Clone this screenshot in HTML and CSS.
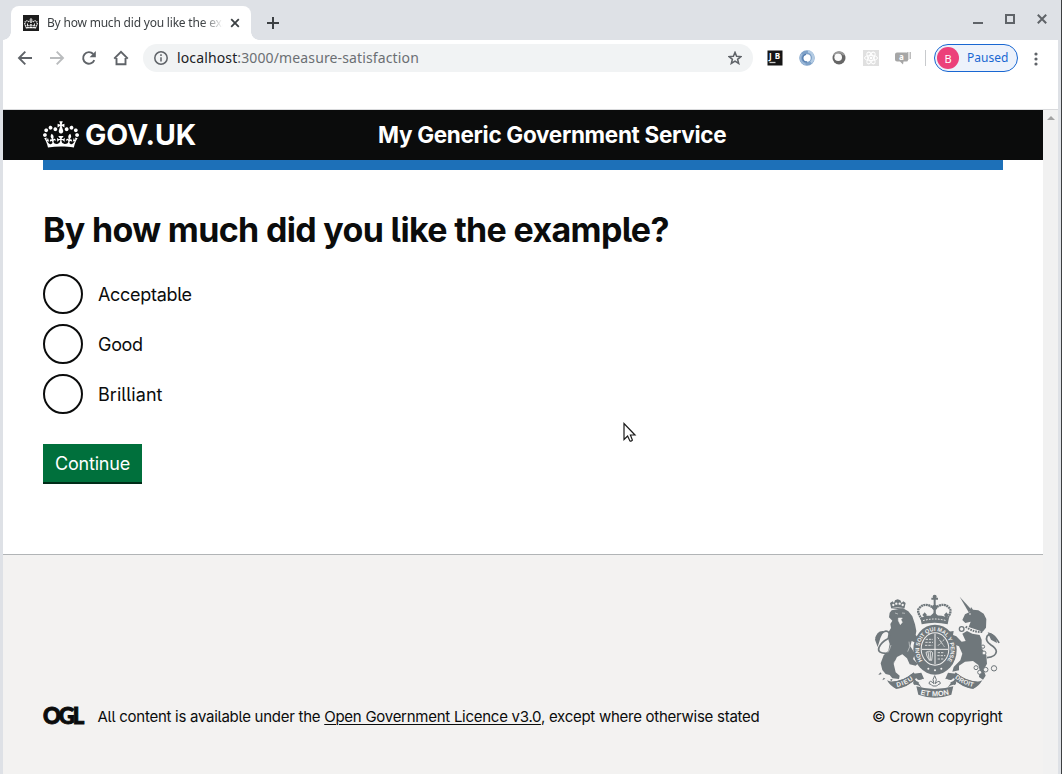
FILE: index.html
```html
<!DOCTYPE html>
<html lang="en">
<head>
<meta charset="utf-8">
<title>By how much did you like the example?</title>
<link rel="stylesheet" href="styles.css">
</head>
<body>
<svg class="defs" aria-hidden="true">
  <symbol id="crown" viewBox="0 0 132 97">
    <path d="M25 30.2c3.5 1.5 7.7-.2 9.1-3.7 1.5-3.6-.2-7.8-3.9-9.2-3.6-1.4-7.6.3-9.1 3.9-1.4 3.5.3 7.5 3.9 9zM9 39.5c3.6 1.5 7.8-.2 9.2-3.7 1.5-3.6-.2-7.8-3.9-9.1-3.6-1.5-7.6.2-9.1 3.8-1.4 3.5.3 7.5 3.8 9zM4.4 57.2c3.5 1.5 7.7-.2 9.1-3.8 1.5-3.6-.2-7.7-3.9-9.1-3.5-1.5-7.6.3-9.1 3.8-1.4 3.5.3 7.6 3.9 9.1zm38.3-21.4c3.5 1.5 7.7-.2 9.1-3.8 1.5-3.6-.2-7.7-3.9-9.1-3.6-1.5-7.6.3-9.1 3.8-1.3 3.6.4 7.7 3.9 9.1zm64.4-5.6c-3.6 1.5-7.8-.2-9.1-3.7-1.5-3.6.2-7.8 3.8-9.2 3.6-1.4 7.7.3 9.2 3.9 1.3 3.5-.4 7.5-3.9 9zm15.9 9.3c-3.6 1.5-7.7-.2-9.1-3.7-1.5-3.6.2-7.8 3.7-9.1 3.6-1.5 7.7.2 9.2 3.8 1.5 3.5-.3 7.5-3.8 9zm4.7 17.7c-3.6 1.5-7.8-.2-9.2-3.8-1.5-3.6.2-7.7 3.9-9.1 3.6-1.5 7.7.3 9.2 3.8 1.3 3.5-.4 7.6-3.9 9.1zM89.3 35.8c-3.6 1.5-7.8-.2-9.2-3.8-1.4-3.6.2-7.7 3.9-9.1 3.6-1.5 7.7.3 9.2 3.8 1.4 3.6-.3 7.7-3.9 9.1zM69.7 17.7l8.9 4.7V9.3l-8.9 2.8c-.2-.3-.5-.6-.9-.9L72.4 0H59.6l3.5 11.2c-.3.3-.6.5-.9.9l-8.8-2.8v13.1l8.8-4.7c.3.3.6.7.9.9l-5 15.4v.1c-.2.8-.4 1.6-.4 2.4 0 4.1 3.1 7.5 7 8.1h.2c.3 0 .7.1 1 .1.4 0 .7 0 1-.1h.2c4-.6 7.1-4.1 7.1-8.1 0-.8-.1-1.7-.4-2.4V34l-5.1-15.4c.4-.2.7-.6 1-.9zM66 92.8c16.9 0 32.8 1.1 47.1 3.2 4-16.9 8.9-26.7 14-33.5l-9.6-3.4c1 4.9 1.1 7.2 0 10.2-1.5-1.4-3-4.3-4.2-8.7L108.6 76c2.8-2 5-3.2 7.5-3.3-4.4 9.4-10 11.9-13.6 11.2-4.3-.8-6.3-4.6-5.6-7.9 1-4.7 5.7-5.9 8-.5 4.3-8.7-3-11.4-7.6-8.8 7.1-7.2 7.9-13.5 2.1-21.1-8 6.1-8.1 12.3-4.5 20.8-4.7-5.4-12.1-2.5-9.5 6.2 3.4-5.2 7.9-2 7.2 3.1-.6 4.3-6.4 7.8-13.5 7.2-10.3-.9-10.9-8-11.2-13.8 2.5-.5 7.1 1.8 11 7.3L80.2 60c-4.1 4.4-8 5.3-12.3 5.4 1.4-4.4 8-11.6 8-11.6H55.5s6.4 7.2 7.9 11.6c-4.2-.1-8-1-12.3-5.4l1.4 16.4c3.9-5.5 8.5-7.7 10.9-7.3-.3 5.8-.9 12.8-11.1 13.8-7.2.6-12.9-2.9-13.5-7.2-.7-5 3.8-8.3 7.1-3.1 2.7-8.7-4.6-11.6-9.4-6.2 3.7-8.5 3.6-14.7-4.6-20.8-5.8 7.6-5 13.9 2.2 21.1-4.7-2.6-11.9.1-7.7 8.8 2.3-5.5 7.1-4.2 8.1.5.7 3.3-1.3 7.1-5.7 7.9-3.5.7-9-1.8-13.5-11.2 2.5.1 4.7 1.3 7.5 3.3l-4.7-15.4c-1.2 4.4-2.7 7.2-4.3 8.7-1.1-3-.9-5.3 0-10.2l-9.5 3.4c5 6.9 9.9 16.7 14 33.5 14.8-2.1 30.8-3.2 47.7-3.2z"/>
  </symbol>
</svg>

<div class="window">
  <div class="tabstrip">
    <div class="tab">
      <span class="favicon"><svg width="14" height="11"><use href="#crown"/></svg></span>
      <span class="tab-title">By how much did you like the example?</span>
      <svg class="tab-close" width="10" height="10" viewBox="0 0 10 10"><path d="M1.2 1.2l7.6 7.6M8.8 1.2L1.2 8.8"/></svg>
    </div>
    <svg class="new-tab" width="12" height="12" viewBox="0 0 12 12"><path d="M6 0v12M0 6h12"/></svg>
    <div class="window-controls">
      <svg width="10" height="12" viewBox="0 0 10 12"><path d="M0 10h10"/></svg>
      <svg width="10" height="12" viewBox="0 0 10 12"><path d="M1 2h8v8H1z"/></svg>
      <svg width="10" height="12" viewBox="0 0 10 12"><path d="M.8 1.8l8.4 8.4M9.2 1.8L.8 10.2"/></svg>
    </div>
  </div>

  <div class="toolbar">
    <div class="nav">
      <svg width="16" height="16" viewBox="0 0 16 16"><path d="M15 8H2.5M8.3 1.7L2 8l6.3 6.3"/></svg>
      <svg class="disabled" width="16" height="16" viewBox="0 0 16 16"><path d="M1 8h12.500M7.700 1.700L14 8l-6.300 6.300"/></svg>
      <svg width="16" height="16" viewBox="0 0 16 16"><path d="M13.300 10.200A5.800 5.800 0 1 1 12.200 4"/><path class="solid" d="M14.800 1v6.200H8.600z"/></svg>
      <svg width="16" height="16" viewBox="0 0 16 16"><path d="M1.200 8.600L8 1.900l6.800 6.700M3.500 8v6.200h9V8"/></svg>
    </div>
    <div class="omnibox">
      <svg class="info" width="14" height="14" viewBox="0 0 14 14"><circle cx="7" cy="7" r="6.200"/><path d="M7 6.200V10.500M7 3.300v1.700"/></svg>
      <span class="url"><b>localhost</b>:3000/measure-satisfaction</span>
      <svg class="star" width="14" height="14" viewBox="0 0 14 14"><path d="M7 1.400l1.600 3.900 4.300.3-3.300 2.700 1.100 4.200L7 10.200l-3.700 2.300 1.100-4.200L1.100 5.600l4.300-.3z"/></svg>
    </div>
    <div class="extensions">
      <svg width="16" height="16" viewBox="0 0 16 16"><rect width="15" height="15" x=".5" y=".5" fill="#151515"/><text class="jb" x="2" y="9" textLength="11">JB</text><path d="M2.500 12.500h6" stroke="#ccc" stroke-width="1.300"/></svg>
      <svg width="16" height="16" viewBox="0 0 16 16"><circle cx="8" cy="8" r="5.700" fill="none" stroke="#7ea1c8" stroke-width="4"/><path d="M9 1.300a6.500 6.500 0 0 1 3 11.200" fill="none" stroke="#b3cbe3" stroke-width="2.500"/><path d="M6.500 14.400a6.500 6.500 0 0 1-3.500-10.500" fill="none" stroke="#9db9d9" stroke-width="1.500"/><path d="M7 4.300a3.800 3.800 0 0 0 1 7.600" fill="none" stroke="#557daf" stroke-width="1.200"/></svg>
      <svg width="16" height="16" viewBox="0 0 16 16"><circle cx="8" cy="8" r="6.500" fill="#666"/><path d="M3 5a6 6 0 0 1 10 0" fill="none" stroke="#999" stroke-width="2"/><circle cx="7.200" cy="7.200" r="3.800" fill="#fafafa"/></svg>
      <svg width="16" height="16" viewBox="0 0 16 16"><rect width="16" height="16" fill="#e0e0e0"/><g fill="none" stroke="#fff"><ellipse cx="8" cy="8" rx="6.500" ry="2.600"/><ellipse cx="8" cy="8" rx="6.500" ry="2.600" transform="rotate(60 8 8)"/><ellipse cx="8" cy="8" rx="6.500" ry="2.600" transform="rotate(120 8 8)"/></g><circle cx="8" cy="8" r="1.300" fill="#fff"/></svg>
      <svg width="16" height="16" viewBox="0 0 16 16"><path d="M12 2h1.500v8H12zM14.500 2H16v7h-1.500z" fill="#bdbdbd"/><path d="M2 2.500h9.500q1.500 0 1.500 1.500v6q0 1.500-1.500 1.500H8.500L8 14.500l-3-3H2Q0 11.500 0 9.500V4.500q0-2 2-2z" fill="#a6a6a6"/><text class="ext-a" x="4" y="10">a</text></svg>
    </div>
    <span class="divider"></span>
    <div class="profile"><span class="avatar">B</span><span>Paused</span></div>
    <svg class="menu" width="4" height="14" viewBox="0 0 4 14"><circle cx="2" cy="2" r="1.600"/><circle cx="2" cy="7" r="1.600"/><circle cx="2" cy="12" r="1.600"/></svg>
  </div>

  <div class="viewport">
    <div class="page">
      <header class="header">
        <div class="brand"><svg width="36" height="27"><use href="#crown"/></svg><span class="wordmark">GOV.UK</span></div>
        <span class="service">My Generic Government Service</span>
      </header>
      <div class="blue-bar"></div>
      <main class="main">
        <h1>By how much did you like the example?</h1>
        <div class="radios">
          <label><span class="radio"></span>Acceptable</label>
          <label><span class="radio"></span>Good</label>
          <label class="loose"><span class="radio"></span>Brilliant</label>
        </div>
        <button class="button" type="button">Continue</button>
      </main>
      <footer class="footer">
        <div class="licence">
          <span class="ogl">OGL</span>
          <span class="licence-text">All content is available under the <a href="#">Open Government Licence v3.0</a>, except where otherwise stated</span>
        </div>
        <div class="copyright">
          <svg class="crest" width="131" height="104" viewBox="39 27 393 312">
            <!-- lion -->
            <path d="M97 72l-4-18 8-5 4 5 3-8 8-3 8 3 4 8 5-5 7 5-4 18z"/>
            <g fill="#f3f2f1"><circle cx="103" cy="60" r="3.500"/><circle cx="112" cy="56" r="3.500"/><circle cx="122" cy="56" r="3.500"/><circle cx="131" cy="60" r="3.500"/></g>
            <path d="M96 71q20-7 41 0" fill="none" stroke="#f3f2f1" stroke-width="2"/>
            <path d="M98 76l34-6 16 9 12 15 8 24 4 20-2 12 12 14-6 12-18-8-4 16 14 22-6 16 14 14-6 6-18-4-8-18-14-12-16 8-10 20 6 26 12 10-2 10-20-2-8-10-12-3-10-12-5-20 9-24 14-14 4-20-6-20 4-18 6-10-2-12 6-10-10-10 2-14z"/>
            <path d="M108 84l9 3M129 84l9 1M118 99h12l-4 5 4 8-6 7-6-12z" fill="#f3f2f1" stroke="#f3f2f1" stroke-width="1.500"/>
            <path d="M104 232q14-12 30-8M150 170q6 16-4 30M96 180q-4 16-12 26" fill="none" stroke="#f3f2f1" stroke-width="1.500"/>
            <path d="M87 205q-34 2-27-18 8-16 24-24 12-8 6-20-8-10-22 2-12 14-18 12" fill="none" stroke="#6f777b" stroke-width="5"/>
            <path d="M74 138q-22-2-26 26l8 22 8-26z"/>
            <path d="M64 262l-6 8 10-3zM74 278l-4 8 9-5zM94 282l2 8 5-7z"/>
            <!-- unicorn -->
            <path d="M302 35l37 41-10 6z"/>
            <path d="M336 66l6 8 16 2 16 10 8 16-1 26-10 12-42-14 6-16-16 4-9-9 8-17 15-8z"/>
            <circle cx="333" cy="87" r="2.500" fill="#f3f2f1"/>
            <path d="M320 125q24 18 52 16" fill="none" stroke="#6f777b" stroke-width="6" stroke-dasharray="5 3"/>
            <path d="M310 146l14-8 16 8 22 4 6 14 0 26 14 20 2 26-10 18 6 18-8 12-12-8 2-20-4-16-16-12-24 2-18 12 0 14-20 4 4-14 20-20 6-20-10-22-16-6-22-22 6-16 16-2-2 12 10 4 16 16 12-2z"/>
            <circle cx="308" cy="132" r="7" fill="none" stroke="#6f777b" stroke-width="4"/>
            <path d="M384 218q26-2 28-18 0-10-16-20-18-12-12-26 8-12 22 0 12 14 14 20" fill="none" stroke="#6f777b" stroke-width="5"/>
            <path d="M386 142q24 2 28 32l-18-10z"/>
            <g fill="#f3f2f1" stroke="#6f777b" stroke-width="3"><circle cx="351" cy="248" r="6"/><circle cx="362" cy="262" r="6"/><circle cx="380" cy="254" r="7"/><circle cx="405" cy="250" r="8"/><circle cx="372" cy="185" r="5"/><circle cx="375" cy="204" r="6"/></g>
            <!-- crown above the shield -->
            <g fill="none" stroke="#6f777b"><path d="M189 103q-18-25-8-34 18-20 45 2 27-22 45-2 10 9-8 34" stroke-width="7" stroke-dasharray="6 1.500"/><path d="M227 70v24" stroke-width="7"/><path d="M217 41h20M227 30v32" stroke-width="6"/></g>
            <circle cx="227" cy="35" r="6"/><circle cx="227" cy="67" r="8"/>
            <path d="M198 98l-8-8 7-8 7 8zM208 98l18-16 18 16zM262 98l-7-8 7-8 7 8zM184 98q43-14 86 0l-4 20q-39-10-78 0z"/>
            <path d="M192 107q35-10 70 0" fill="none" stroke="#f3f2f1" stroke-width="3" stroke-dasharray="5 4"/>
            <!-- garter and shield -->
            <ellipse cx="228" cy="194" rx="65" ry="75"/>
            <ellipse cx="228" cy="192" rx="43" ry="50" fill="#f3f2f1"/>
            <ellipse cx="228" cy="192" rx="40" ry="47"/>
            <path d="M228 146v92M189 193h78" stroke="#f3f2f1" stroke-width="3"/>
            <g stroke="#f3f2f1" stroke-width="2.500" fill="none"><path d="M200 163h22M199 172h23M198 181h22M236 157l20 28M256 163l-20 20M236 203h20M235 212h24M236 222h18" stroke-dasharray="7 3"/><path d="M201 202q16-8 20 2l-3 22q-12 2-17-24M207 201l4 26M214 201v24"/></g>
            <path id="garter" d="M191 227A47 55 0 1 1 265 227" fill="none"/>
            <text class="motto"><textPath href="#garter" textLength="232" lengthAdjust="spacingAndGlyphs">HONI SOIT QUI MAL Y PENSE</textPath></text>
            <g fill="#f3f2f1"><circle cx="208" cy="251" r="3"/><circle cx="228" cy="256" r="3"/><circle cx="247" cy="251" r="3"/></g>
            <!-- ribbon -->
            <path d="M84 286l14 5q38-4 59-24l30-4 8 18-17 12 11 16q-13-12-22-9-8-4-2-14l8-6q-30 28-62 31-16-6-27-25zM370 286l-14 5q-38-4-59-24l-30-4-8 18 17 12-11 16q13-12 22-9 8-4 2-14l-8-6q30 28 62 31 16-6 27-25z"/>
            <path d="M92 290q44 0 72-28l10 17q-30 30-62 32-12-6-20-21zM362 290q-44 0-72-28l-10 17q30 30 62 32 12-6 20-21z"/>
            <path d="M172 304q54 16 111 0l-6 25q-50 18-99 0z"/>
            <path d="M170 281q6 13 24 3M285 281q-6 13-24 3" stroke="#f3f2f1" stroke-width="6" fill="none"/>
            <path d="M227 272q-9 12-2 24-14-14-15 0 8 2 11 7h12q3-5 11-7-1-14-15 0 7-12-2-24z" fill="none" stroke="#6f777b" stroke-width="3"/>
            <path id="dieu" d="M114 306q28-5 52-25" fill="none"/><path id="droit" d="M287 279q27 22 60 28" fill="none"/><path id="mon" d="M184 328q42 12 88 0" fill="none"/>
            <g class="ribbon-text"><text><textPath href="#dieu" textLength="54">DIEU</textPath></text><text><textPath href="#droit" textLength="62">DROIT</textPath></text><text class="wide"><textPath href="#mon" textLength="88">ET MON</textPath></text></g>
          </svg>
          <span>© Crown copyright</span>
        </div>
      </footer>
    </div>
    <div class="scrollbar"><svg width="8" height="4" viewBox="0 0 8 4"><path d="M4 0l4 4H0z"/></svg></div>
  </div>
</div>
<svg class="cursor" width="14" height="21" viewBox="0 0 14 21"><path d="M1 1.500v16l3.600-3.400 2.200 4.600q1.200 1.100 2.600-.6L7.400 13H12z"/></svg>
</body>
</html>
```
FILE: styles.css
```css
* { box-sizing: border-box; }
body { margin: 0; width: 1062px; height: 774px; overflow: hidden; background: #dee1e6; }
svg { display: block; flex: none; }
.defs { display: none; }

.window { height: 774px; padding: 0 3px 0 3px; border-right: 1px solid #3c3f41; display: flex; flex-direction: column; font-family: "Noto Sans", sans-serif; }

/* Browser chrome */
.tabstrip { height: 40px; display: flex; align-items: flex-start; padding-left: 8px; }
.tab { position: relative; width: 240px; height: 34px; margin-top: 6px; padding: 0 11px 0 12px; background: #fff; border-radius: 8px 8px 0 0; display: flex; align-items: center; }
.tab::before, .tab::after { content: ""; position: absolute; bottom: 0; width: 8px; height: 8px; }
.tab::before { left: -8px; background: radial-gradient(circle at 0 0, transparent 7.5px, #fff 8px); }
.tab::after { right: -8px; background: radial-gradient(circle at 100% 0, transparent 7.5px, #fff 8px); }
.favicon { width: 16px; height: 16px; background: #1d1d1d; display: grid; place-items: center; fill: #fff; flex: none; }
.tab-title { width: 176px; margin-left: 8px; font-size: 12px; letter-spacing: -.2px; line-height: 16px; color: #3c4043; white-space: nowrap; overflow: hidden; -webkit-mask-image: linear-gradient(90deg, #000 155px, transparent 176px); mask-image: linear-gradient(90deg, #000 155px, transparent 176px); }
.tab-close { margin-left: 7px; stroke: #3c4043; stroke-width: 1.8; }
.new-tab { margin: 17px 0 0 16px; stroke: #3c4043; stroke-width: 2; }
.window-controls { margin: 13px 11px 0 auto; display: flex; gap: 22px; fill: none; stroke: #5f6368; stroke-width: 2; }

.toolbar { height: 70px; padding: 4px 17px 0 14px; background: #fff; border-bottom: 1px solid #d9dadc; display: flex; align-items: flex-start; width: 1055px; }
.nav { height: 28px; display: flex; align-items: center; gap: 16px; fill: none; stroke: #5f6368; stroke-width: 1.9; }
.nav .disabled { stroke: #babcbe; }
.nav .solid { fill: #5f6368; stroke: none; }
.omnibox { width: 610px; height: 28px; margin-left: 14px; padding: 0 11px; border-radius: 14px; background: #f1f3f4; display: flex; align-items: center; }
.info, .star { fill: none; stroke: #5f6368; stroke-width: 1.5; }
.url { flex: 1; margin-left: 9px; font-size: 14px; letter-spacing: .13px; line-height: 20px; color: #6b6f73; }
.url b { font-weight: 400; color: #202124; }
.extensions { height: 28px; margin-left: 14px; display: flex; align-items: center; gap: 16px; }
.jb { font: 700 8px "Open Sans", sans-serif; fill: #fff; }
.ext-a { font: 700 8px "Noto Sans", sans-serif; fill: #fff; }
.divider { width: 1px; height: 16px; margin: 6px 8px 0 14px; background: #c8cacd; }
.profile { width: 84px; height: 28px; padding: 0 0 2px 2px; border: 1px solid #1967d2; border-radius: 14px; background: #edf2fb; color: #1967d2; font-size: 12px; display: flex; align-items: center; gap: 8px; }
.avatar { width: 22px; height: 22px; margin-top: 2px; border-radius: 50%; background: #ec407a; color: #fff; font-size: 11px; display: grid; place-items: center; }
.menu { margin: 8px 0 0 16px; fill: #5f6368; }

/* Page */
.viewport { flex: 1; width: 1055px; display: flex; }
.page { width: 1040px; background: #fff; color: #0b0c0c; font-family: Inter, "Liberation Sans", sans-serif; font-feature-settings: "cv05"; display: flex; flex-direction: column; }
.header { height: 50px; padding: 0 40px 2px; background: #0b0c0c; color: #fff; display: flex; align-items: center; }
.brand { width: 335px; display: flex; align-items: center; gap: 6px; fill: #fff; }
.wordmark { font-size: 28.5px; font-weight: 700; letter-spacing: -.05px; }
.service { font-size: 22.5px; font-weight: 700; letter-spacing: -.31px; white-space: nowrap; }
.blue-bar { height: 10px; margin: 0 40px; background: #1d70b8; }
.main { height: 384px; padding: 40px 40px 0; }
h1 { margin: 0; font-size: 34px; font-weight: 700; line-height: 40px; letter-spacing: -.67px; }
.radios { margin-top: 24px; display: flex; flex-direction: column; gap: 10px; }
.radios label { height: 40px; display: flex; align-items: center; gap: 15px; font-size: 18px; letter-spacing: -.3px; }
.radios .loose { letter-spacing: .05px; }
.radio { width: 40px; height: 40px; border: 2px solid #0b0c0c; border-radius: 50%; }
.button { display: block; width: 99px; height: 40px; margin-top: 30px; padding: 1px 0 0; border: 0; border-bottom: 2px solid #002d18; background: #00703c; color: #fff; font: 400 18px Inter, sans-serif; letter-spacing: -.2px; }
.footer { flex: 1; padding: 39px 40px 0; border-top: 1px solid #b1b4b6; background: #f3f2f1; display: flex; justify-content: space-between; font-size: 15px; line-height: 20px; letter-spacing: -.265px; white-space: nowrap; }
.licence { padding-top: 113px; display: flex; align-items: flex-start; }
.ogl { width: 54.5px; font: 900 22px/18px Lato, sans-serif; letter-spacing: -2px; -webkit-text-stroke: 1px #0b0c0c; }
.footer a { color: inherit; text-decoration: underline; text-underline-offset: 2px; text-decoration-thickness: 1px; }
.copyright { width: 131px; letter-spacing: -.32px; }
.crest { margin-bottom: 9px; fill: #6f777b; }
.motto { font: 700 17px "Liberation Sans", sans-serif; letter-spacing: 0; fill: #f3f2f1; }
.ribbon-text { font: 700 19px "Liberation Sans", sans-serif; letter-spacing: 0; fill: #f3f2f1; }
.ribbon-text .wide { font-size: 22px; }
.scrollbar { width: 15px; background: #f1f1f1; padding: 6px 0 0 4px; fill: #a3a3a3; }
.cursor { position: absolute; left: 623px; top: 422px; fill: #fff; stroke: #1a1a1a; stroke-width: 1.2; }
```
